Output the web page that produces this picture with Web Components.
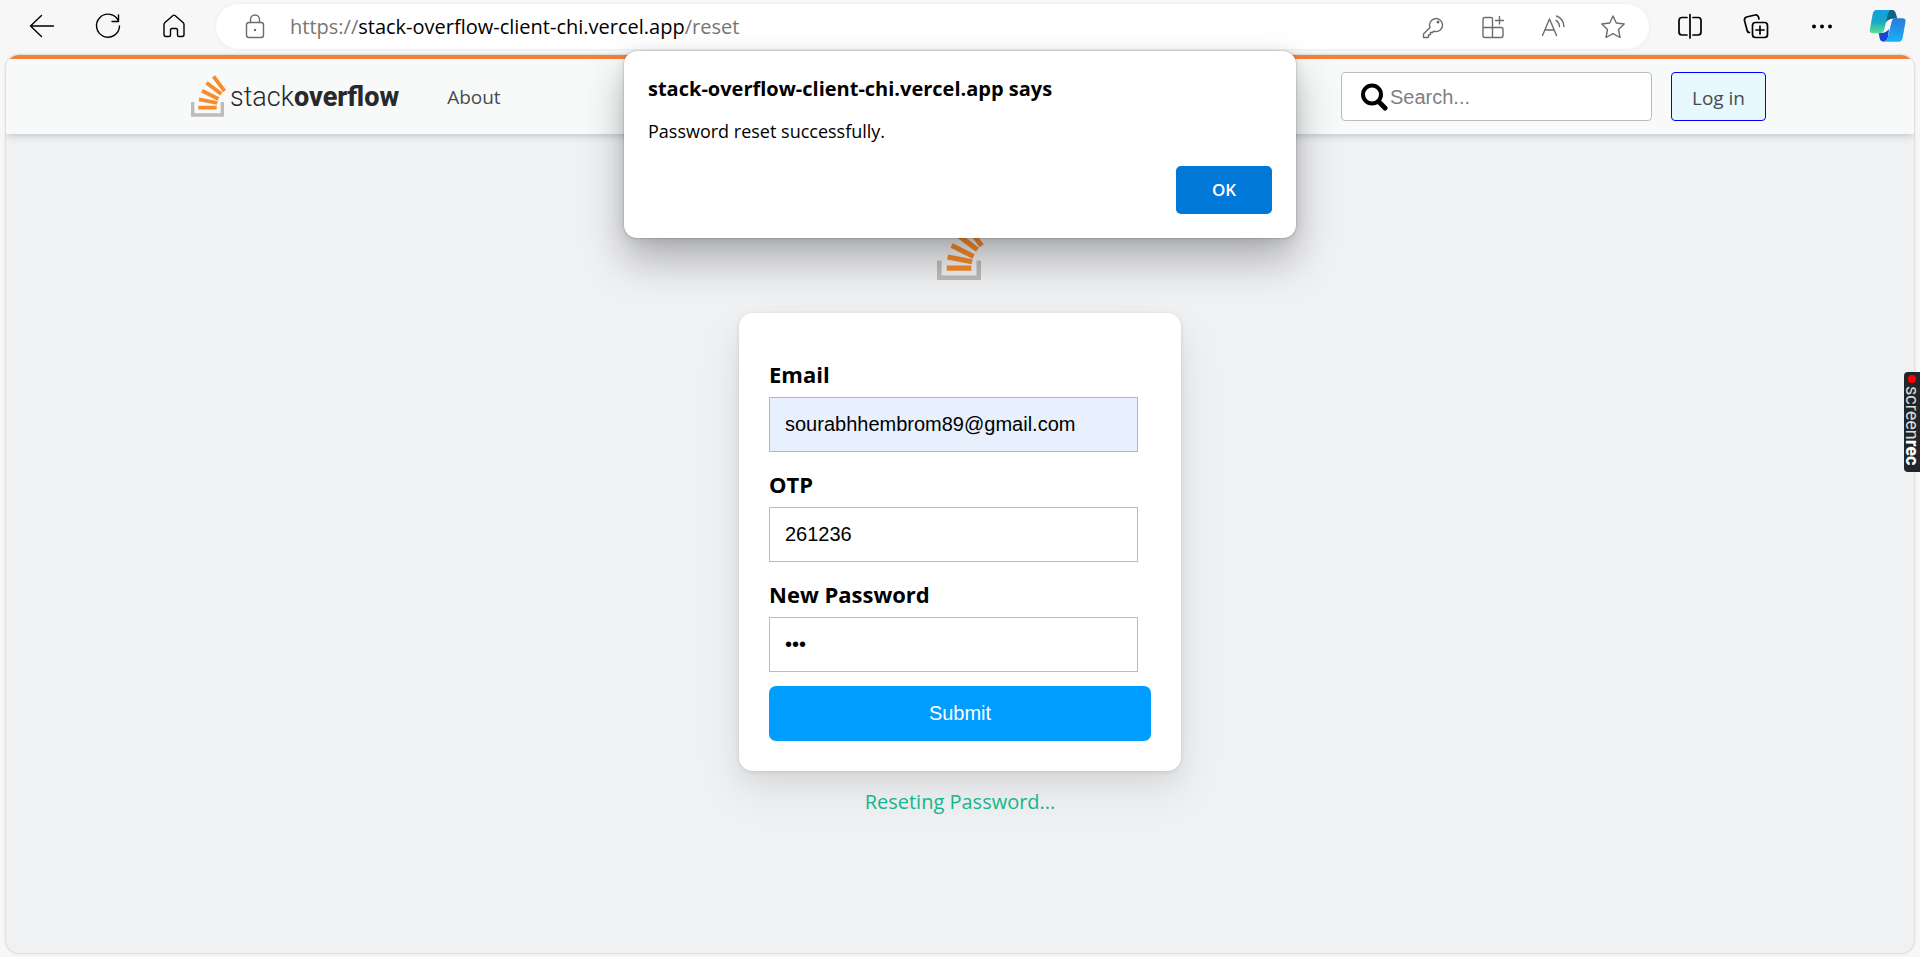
<!DOCTYPE html>
<html lang="en">
<head>
<meta charset="utf-8">
<title>Reset password</title>
<style>
  html, body { margin: 0; height: 100%; }
  body { background: #f7f7f7; font-family: "Open Sans", "Noto Sans", sans-serif; color: #000; overflow: hidden; }
</style>
</head>
<body>
<browser-window>
  <browser-toolbar slot="toolbar"></browser-toolbar>
  <site-header></site-header>
  <reset-page>
    <form-field label="Email" type="email" value="sourabhhembrom89@gmail.com" autofilled></form-field>
    <form-field label="OTP" type="text" value="261236"></form-field>
    <form-field label="New Password" type="password" value="abc"></form-field>
  </reset-page>
  <alert-dialog slot="overlay" heading="stack-overflow-client-chi.vercel.app says">Password reset successfully.</alert-dialog>
  <recorder-tab slot="overlay"></recorder-tab>
</browser-window>

<script>
class Base extends HTMLElement {
  constructor() {
    super();
    this.attachShadow({ mode: 'open' });
  }
  connectedCallback() {
    this.shadowRoot.innerHTML = this.render();
  }
}

customElements.define('browser-window', class extends Base {
  render() {
    return `
    <style>
      :host { display: flex; flex-direction: column; min-height: 100vh; position: relative; }
      .view { flex: 1; display: flex; flex-direction: column; margin: 0 6px 4px; border-radius: 13px;
        background: #f0f1f3; overflow: hidden; box-shadow: 0 0 2px 1px #d8d8d8; }
    </style>
    <slot name="toolbar"></slot>
    <main class="view"><slot></slot></main>
    <slot name="overlay"></slot>`;
  }
});

customElements.define('browser-toolbar', class extends Base {
  render() {
    return `
    <style>
      :host { display: flex; align-items: center; height: 55px; padding: 0 12px 0 22px; box-sizing: border-box; }
      .group { display: flex; align-items: center; margin-bottom: 3px; }
      .left { gap: 26px; margin-right: 22px; }
      .right { gap: 26px; margin-left: 21px; }
      button { border: 0; padding: 0; background: none; width: 40px; height: 40px; display: grid; place-items: center; color: #000; }
      svg { fill: none; stroke: currentColor; stroke-width: 1.4; stroke-linecap: round; stroke-linejoin: round; display: block; }
      .right svg { stroke-width: 1.7; }
      .bar { flex: 1; display: flex; align-items: center; height: 45px; margin: 0 0 2px; border-radius: 23px; background: #fff;
        padding: 0 16px 0 19px; box-shadow: 0 0 3px 1px #eee; }
      .bar button { color: #6c6c6c; }
      .url { flex: 1; margin-left: 15px; font-size: 20px; line-height: 28px; color: #767676; white-space: nowrap; }
      .url b { font-weight: 400; color: #000; }
      .tools { display: flex; gap: 20px; }
    </style>
    <nav class="group left" aria-label="Navigation">
      <button aria-label="Back"><svg width="28" height="28" viewBox="0 0 28 28"><path d="M25.500 14H2.500M13.500 3.500L2.500 14L13.500 24.500"/></svg></button>
      <button aria-label="Refresh"><svg width="28" height="28" viewBox="0 0 28 28"><path d="M24.500 9A11.500 11.500 0 1 0 25.500 14M24.500 3V9.500H18"/></svg></button>
      <button aria-label="Home"><svg width="28" height="28" viewBox="0 0 28 28"><path d="M4 12.500Q4 11.500 5 10.500L13 3.500Q14 2.700 15 3.500L23 10.500Q24 11.500 24 12.500V22.500Q24 24.500 22 24.500H19Q17.500 24.500 17.500 23V18Q17.500 16.500 16 16.500H12Q10.500 16.500 10.500 18V23Q10.500 24.500 9 24.500H6Q4 24.500 4 22.500Z"/></svg></button>
    </nav>
    <div class="bar">
      <button aria-label="Site information"><svg width="28" height="28" viewBox="0 0 28 28"><rect x="5.500" y="9.500" width="17" height="15" rx="2.500"/><path d="M9.500 9.500V6.500A4.500 4.500 0 0 1 18.500 6.500V9.500"/><circle cx="14" cy="17" r="1.200" fill="currentColor" stroke="none"/></svg></button>
      <div class="url">https://<b>stack-overflow-client-chi.vercel.app</b>/reset</div>
      <div class="tools">
        <button aria-label="Passwords"><svg width="28" height="28" viewBox="0 0 28 28"><path d="M11 14.500A6.500 6.500 0 1 1 16 18.500L14.500 18.300L13.500 19.500H11.500V21.500L9.500 22V24L8.500 24.500H4.500V21Z"/><circle cx="19" cy="9" r=".8"/></svg></button>
        <button aria-label="Extensions"><svg width="28" height="28" viewBox="0 0 28 28"><path d="M13.500 24.500V6Q13.500 4.500 12 4.500H6Q4 4.500 4 6.500V22.500Q4 24.500 6 24.500H22Q24 24.500 24 22.500V16.500Q24 14.500 22 14.500H4M20.500 3.500V11M16.500 7.500H24.500"/></svg></button>
        <button aria-label="Read aloud"><svg width="28" height="28" viewBox="0 0 28 28"><path d="M3.500 22.500L10.500 6L17.500 22.500M6 17H15M17 7.500Q20 9 20.500 13.500M17.500 3Q24.500 5.500 25 13.500"/></svg></button>
        <button aria-label="Favorite"><svg width="28" height="28" viewBox="0 0 28 28"><path d="M14 3L17.300 10L25.200 11L19.500 16.500L21 24.500L14 20.700L7 24.500L8.500 16.500L2.800 11L10.700 10Z"/></svg></button>
      </div>
    </div>
    <div class="group right">
      <button aria-label="Split screen"><svg width="28" height="28" viewBox="0 0 28 28"><path d="M14 2.500V26M11 5.500H6Q3 5.500 3 8.500V20Q3 23 6 23H11M17 5.500H22Q25 5.500 25 8.500V20Q25 23 22 23H17"/></svg></button>
      <button aria-label="Collections"><svg width="28" height="28" viewBox="0 0 28 28"><rect x="10.500" y="10.500" width="15" height="15" rx="3"/><path d="M18 14V22M14 18H22M7.500 20.500Q5.500 20.500 5 18L2.500 8.500Q2 6 4.500 5L13 3Q15.500 2.300 16.500 5L17 7"/></svg></button>
      <button aria-label="Settings and more"><svg width="28" height="28" viewBox="0 0 28 28"><g fill="currentColor" stroke="none"><circle cx="6" cy="14.500" r="2"/><circle cx="14" cy="14.500" r="2"/><circle cx="22" cy="14.500" r="2"/></g></svg></button>
      <button aria-label="Copilot"><svg width="38" height="34" viewBox="25 30 114 102">
        <defs>
          <linearGradient id="a" x1="0" y1="0" x2="0" y2="1"><stop offset="0" stop-color="#129fe0"/><stop offset=".5" stop-color="#16a8c6"/><stop offset="1" stop-color="#5de08f"/></linearGradient>
          <linearGradient id="b" x1="0" y1="0" x2="0" y2="1"><stop offset="0" stop-color="#2d78d8"/><stop offset="1" stop-color="#17b2fb"/></linearGradient>
        </defs>
        <g stroke="none">
          <path fill="#0b6483" d="M82 33H95Q103 33 106 45L110 59H96Q84 59 76 70L77 50Z"/>
          <path fill="#1746d2" d="M54 102H62Q76 102 85 90L82 114Q78 128 68 128Q59 128 57 118Z"/>
          <path fill="url(#a)" d="M47 33H92Q84 35 81 48L71 90Q68 103 58 103H37Q25 103 28 90L36 45Q39 33 47 33Z"/>
          <path fill="url(#b)" d="M115 128H70Q79 126 82 113L92 71Q95 58 104 58H125Q137 58 134 71L126 116Q123 128 115 128Z"/>
        </g></svg></button>
    </div>`;
  }
});

customElements.define('stack-icon', class extends Base {
  render() {
    return `
    <style>
      :host { display: block; width: 36px; height: 42px; }
      svg { display: block; width: 100%; height: 100%; fill: none; }
    </style>
    <svg viewBox="0 0 36 42" aria-hidden="true">
      <path d="M1.700 27V40H31.300V27" stroke="#bcbcbc" stroke-width="3.400"/>
      <g stroke="#f98b2a" stroke-width="3.800">
        <path d="M7.300 32.700H25.700M8 24.300L26.300 28M11 15.800L27.500 24M15.500 7.800L30.300 18.900M22.500 1.300L33.500 16"/>
      </g>
    </svg>`;
  }
});

customElements.define('site-header', class extends Base {
  render() {
    return `
    <style>
      :host { display: block; background: #f8faf9; border-top: 4px solid #f48236; box-shadow: 0 1px 8px #b9bcc0; }
      nav { display: flex; align-items: center; height: 75px; max-width: 1612px; margin: 0 auto; box-sizing: border-box; padding-left: 37px; }
      a { color: #484b4e; text-decoration: none; }
      .logo { display: flex; margin-right: 48px; gap: 3px; color: #27292c; font: 300 27px/44px Roboto, sans-serif; }
      .logo b { font-weight: 800; }
      .about { font-size: 19px; line-height: 28px; font-weight: 500; }
      .search { display: flex; align-items: center; box-sizing: border-box; width: 311px; height: 49px; margin-left: auto;
        border: 1px solid #bbb; border-radius: 4px; background: #fff; padding-left: 18px; }
      .search svg { flex: none; }
      input { flex: 1; min-width: 0; border: 0; outline: 0; padding: 0 0 0 2px; background: none; font: 20px/28px "Liberation Sans", sans-serif; }
      input::placeholder { color: #808080; }
      .login { box-sizing: border-box; height: 49px; width: 95px; text-align: center; border: 1px solid #00f; border-radius: 4px; background: #e7f8fe;
        margin-left: 19px; font-size: 19px; line-height: 50px; font-weight: 500; }
    </style>
    <nav>
      <a class="logo" href="#"><stack-icon></stack-icon><span>stack<b>overflow</b></span></a>
      <a class="about" href="#">About</a>
      <label class="search">
        <svg width="28" height="28" viewBox="0 0 28 28" aria-hidden="true"><circle cx="12" cy="11.500" r="9" fill="none" stroke="#000" stroke-width="4"/><path d="M18.500 18.500L25 25" stroke="#000" stroke-width="5" stroke-linecap="round"/></svg>
        <input type="search" placeholder="Search..." aria-label="Search">
      </label>
      <a class="login" href="#">Log in</a>
    </nav>`;
  }
});

customElements.define('form-field', class extends Base {
  render() {
    const a = n => this.getAttribute(n);
    return `
    <style>
      :host { display: block; height: 110px; }
      label { display: block; font-size: 22px; font-weight: 700; line-height: 30px; padding: 9px 0 8px; }
      input { display: block; box-sizing: border-box; width: 369px; max-width: 100%; height: 55px; padding: 0 15px; margin: 0;
        border: 1px solid #bbb; border-radius: 0; outline: 0; background: #fff; color: #000; font: 20px/28px "Liberation Sans", sans-serif; }
      :host([autofilled]) input { background: #e8f0fe; border-color: #b0b8c4; }
    </style>
    <label for="f">${a('label')}</label>
    <input id="f" type="${a('type')}" value="${a('value')}">`;
  }
});

customElements.define('reset-page', class extends Base {
  render() {
    return `
    <style>
      :host { display: flex; flex-direction: column; align-items: center; padding-top: 90px; }
      stack-icon { width: 48px; height: 57px; padding-left: 2px; margin-bottom: 32px; }
      form { box-sizing: border-box; width: 442px; max-width: 100%; padding: 37px 30px 30px; border-radius: 14px; background: #fff;
        box-shadow: 0 10px 25px rgba(0,0,0,.05), 0 20px 48px rgba(0,0,0,.07), 0 1px 4px rgba(0,0,0,.1); }
      button { display: block; width: 100%; height: 55px; margin-top: 6px; padding-bottom: 2px; border: 0; border-radius: 7px; background: #009dff;
        color: #fff; font: 20px/28px "Liberation Sans", sans-serif; }
      p { margin: 17px 0 0; font-size: 20px; line-height: 28px; color: #12b68c; }
    </style>
    <stack-icon></stack-icon>
    <form onsubmit="return false"><slot></slot><button type="submit">Submit</button></form>
    <p role="status">Reseting Password...</p>`;
  }
});

customElements.define('alert-dialog', class extends Base {
  render() {
    return `
    <style>
      :host { position: absolute; top: 51px; left: 50%; transform: translateX(-50%); width: 672px; box-sizing: border-box;
        padding: 22px 24px 24px; border-radius: 13px; background: #fff;
        box-shadow: 0 0 2px rgba(0,0,0,.35), 0 22px 42px rgba(0,0,0,.28), 0 2px 14px rgba(0,0,0,.1); }
      h1 { margin: 0; font-size: 20px; line-height: 32px; font-weight: 700; }
      p { margin: 10px 0 19px; font-size: 18px; line-height: 32px; }
      button { display: block; margin-left: auto; width: 96px; height: 48px; border: 0; border-radius: 5px; background: #0078d7; color: #fff;
        font: 600 17px/24px "Open Sans", sans-serif; }
    </style>
    <div role="alertdialog" aria-labelledby="t">
      <h1 id="t">${this.getAttribute('heading')}</h1>
      <p><slot></slot></p>
      <button type="button">OK</button>
    </div>`;
  }
});

customElements.define('recorder-tab', class extends Base {
  render() {
    return `
    <style>
      :host { position: absolute; right: 0; top: 372px; display: flex; flex-direction: column; align-items: center; gap: 3px; box-sizing: border-box;
        width: 16px; height: 100px; padding-top: 3px; border-radius: 4px 0 0 4px; background: #22262b; color: #ddd; }
      i { width: 8px; height: 8px; border-radius: 50%; background: #f00; }
      span { writing-mode: vertical-rl; font: 400 18px/16px Roboto, sans-serif; }
      b { font-weight: 800; color: #fff; }
    </style>
    <i></i><span>screen<b>rec</b></span>`;
  }
});
</script>
</body>
</html>
